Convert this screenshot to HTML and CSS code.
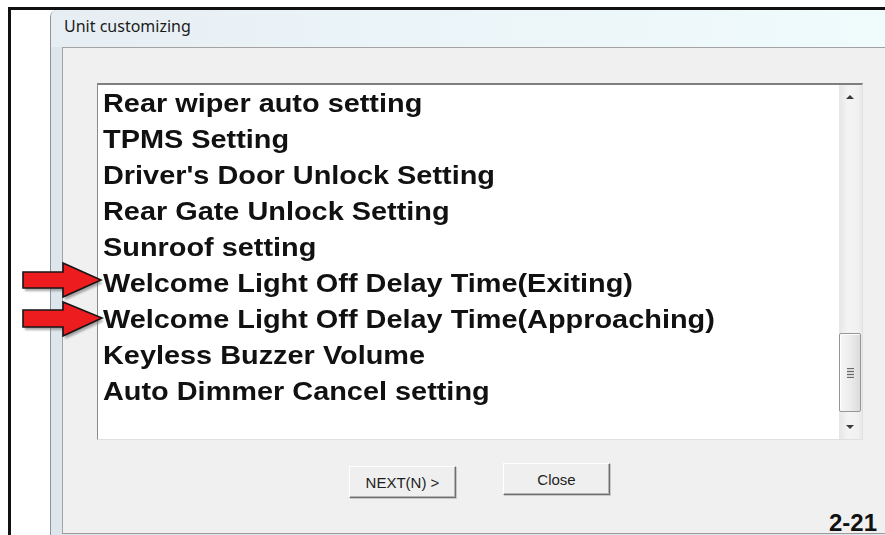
FILE: index.html
```html
<!DOCTYPE html>
<html lang="en">
<head>
<meta charset="utf-8">
<title>Unit customizing</title>
<link rel="stylesheet" href="styles.css">
</head>
<body>
<div class="page">
  <div class="sheet">
    <div class="window">
      <div class="titlebar">Unit customizing</div>
      <div class="client">
        <div class="listbox">
          <ul class="items">
            <li><span>Rear wiper auto setting</span></li>
            <li><span>TPMS Setting</span></li>
            <li><span>Driver's Door Unlock Setting</span></li>
            <li><span>Rear Gate Unlock Setting</span></li>
            <li><span>Sunroof setting</span></li>
            <li><span>Welcome Light Off Delay Time(Exiting)</span></li>
            <li><span>Welcome Light Off Delay Time(Approaching)</span></li>
            <li><span>Keyless Buzzer Volume</span></li>
            <li><span>Auto Dimmer Cancel setting</span></li>
          </ul>
          <div class="scrollbar">
            <div class="sb-btn"><i class="tri-up"></i></div>
            <div class="track">
              <div class="thumb"><i class="grip"></i></div>
            </div>
            <div class="sb-btn"><i class="tri-down"></i></div>
          </div>
        </div>
        <div class="actions">
          <button class="btn btn-next">NEXT(N) &gt;</button>
          <button class="btn">Close</button>
        </div>
      </div>
    </div>
  </div>

  <!-- callout arrows pointing at the two welcome-light entries -->
  <svg class="callouts" width="92" height="86" viewBox="16 256 92 86">
    <defs>
      <filter id="soft" x="-20%" y="-20%" width="140%" height="140%">
        <feGaussianBlur stdDeviation="1.2"/>
      </filter>
    </defs>
    <g fill="#6e6e6e" opacity="0.6" filter="url(#soft)" transform="translate(2 3)">
      <polygon points="23,272 63,272 63,263 101,280 63,297 63,288 23,288"/>
      <polygon points="23,310 63,310 63,302 102,318 63,336 63,327 23,327"/>
    </g>
    <g fill="#ec1c1f" stroke="#161616" stroke-width="1.6" stroke-linejoin="miter">
      <polygon points="23,272 63,272 63,263 101,280 63,297 63,288 23,288"/>
      <polygon points="23,310 63,310 63,302 102,318 63,336 63,327 23,327"/>
    </g>
  </svg>

  <div class="page-no">2-21</div>
</div>
</body>
</html>
```
FILE: styles.css
```css
* {
  box-sizing: border-box;
}

html, body {
  margin: 0;
  padding: 0;
  background: #ffffff;
}

.page {
  position: relative;
  width: 885px;
  height: 535px;
  overflow: hidden;
  background: #ffffff;
}

/* black page frame along the top and left */
.sheet {
  display: flex;
  margin: 7px 0 0 8px;
  height: 528px;
  padding-left: 39px;
  border-left: 3px solid #111111;
  border-top: 3px solid #111111;
}

.window {
  flex: 1;
  display: flex;
  flex-direction: column;
  background: #dde6ed;
  border-left: 1px solid #8d959c;
  border-top-left-radius: 7px;
  overflow: hidden;
}

.titlebar {
  height: 37px;
  padding: 5px 0 0 13px;
  font-family: "Noto Sans", "DejaVu Sans", sans-serif;
  font-size: 16px;
  line-height: 22px;
  color: #1c1c1c;
  background: linear-gradient(to right, #e7eef3 0%, #ecf6f9 55%, #f0fbfc 100%);
}

.client {
  flex: 1;
  margin: 0 0 1px 11px;
  background: #f0f0f0;
  border-left: 1px solid #a3a3a3;
  border-top: 1px solid #a3a3a3;
  border-bottom: 1px solid #9c9c9c;
  padding: 35px 0 0 34px;
}

.listbox {
  display: flex;
  width: 766px;
  height: 357px;
  background: #ffffff;
  border-top: 2px solid #7f7f7f;
  border-left: 1px solid #8a8a8a;
  border-right: 1px solid #e0e0e0;
  border-bottom: 1px solid #e0e0e0;
}

.items {
  flex: 1;
  margin: 0;
  padding: 0 0 0 5px;
  list-style: none;
}

.items li {
  height: 36px;
  line-height: 36px;
  white-space: nowrap;
  font-family: "Liberation Sans", Arial, sans-serif;
  font-weight: bold;
  font-size: 25px;
  color: #111111;
}

.items li span {
  display: inline-block;
  transform: scaleX(1.155);
  transform-origin: left center;
}

.scrollbar {
  width: 23px;
  display: flex;
  flex-direction: column;
  background: linear-gradient(to right, #e6e6e6 0%, #f4f4f4 40%, #f1f1f1 80%, #e9e9e9 100%);
}

.sb-btn {
  height: 24px;
  display: flex;
  align-items: center;
  justify-content: center;
  padding-right: 1px;
}

.sb-btn:last-child {
  height: 25px;
}

.tri-up {
  width: 0;
  height: 0;
  border-left: 4px solid transparent;
  border-right: 4px solid transparent;
  border-bottom: 4px solid #3a3a3a;
}

.tri-down {
  width: 0;
  height: 0;
  border-left: 4px solid transparent;
  border-right: 4px solid transparent;
  border-top: 4px solid #3a3a3a;
}

.track {
  flex: 1;
  display: flex;
  flex-direction: column;
  justify-content: flex-end;
}

.thumb {
  height: 79px;
  width: 22px;
  margin-bottom: 2px;
  border: 1px solid #969696;
  border-radius: 2px;
  background: linear-gradient(to right, #f6f6f6 0%, #ececec 50%, #dcdcdc 100%);
  box-shadow: inset 1px 1px 0 #ffffff;
  display: flex;
  align-items: center;
  justify-content: center;
}

.grip {
  width: 7px;
  height: 10px;
  background: repeating-linear-gradient(to bottom, #6a6a6a 0, #6a6a6a 1px, #d8d8d8 1px, #d8d8d8 3px);
}

.actions {
  display: flex;
  align-items: flex-start;
  gap: 47px;
  margin: 23px 0 0 252px;
}

.btn {
  width: 107px;
  height: 32px;
  padding: 0;
  margin: 0;
  font-family: "Liberation Sans", Arial, sans-serif;
  font-size: 15px;
  color: #1e1e1e;
  background: #efefef;
  border: 1px solid;
  border-color: #ffffff #6f6f6f #6f6f6f #ffffff;
  box-shadow: inset -1px -1px 0 #b4b4b4, 1px 1px 0 #c9c9c9;
}

.btn-next {
  margin-top: 3px;
}

.callouts {
  position: absolute;
  left: 16px;
  top: 256px;
}

.page-no {
  position: absolute;
  right: 8px;
  top: 511px;
  font-family: "Liberation Sans", Arial, sans-serif;
  font-weight: bold;
  font-size: 24px;
  line-height: 24px;
  color: #111111;
}
```
